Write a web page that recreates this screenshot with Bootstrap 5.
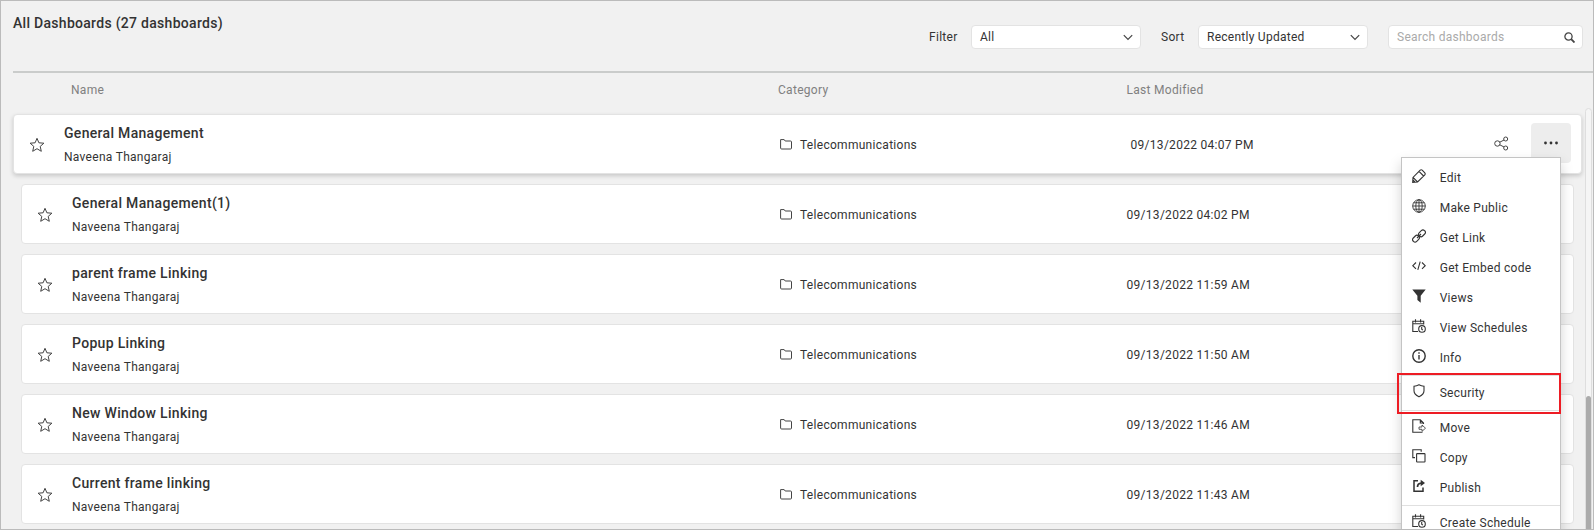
<!DOCTYPE html>
<html lang="en">
<head>
<meta charset="utf-8">
<title>All Dashboards</title>
<meta name="viewport" content="width=device-width, initial-scale=1">
<link href="https://cdn.jsdelivr.net/npm/bootstrap@5.3.0/dist/css/bootstrap.min.css" rel="stylesheet">
<style>
  body { font-family: Roboto, "Liberation Sans", sans-serif; font-size: 12px; line-height: 18px; letter-spacing: .29px; color: #333; background: #f1f1f1; }
  svg { display: block; fill: none; stroke: #444; stroke-width: 1; flex: none; }
  .frame { height: 530px; border: 1px solid #bbb; background: #f1f1f1; }
  .topbar { height: 72px; margin-left: 12px; border-bottom: 2px solid #cacccb; }
  .page-title { font-size: 14px; line-height: 20px; font-weight: 500; letter-spacing: .29px; padding-top: 12px; }
  .controls { padding: 24px 10px 0 0; height: 48px; }
  .ctl-label { width: 37px; }
  .ctl-label.wide { width: 42px; }
  .field { height: 24px; border: 1px solid #e3e3e3; border-radius: 4px; background: #fff; padding: 0 8px; letter-spacing: .26px; }
  .pick { width: 170px; margin-right: 20px; padding-right: 7px; }
  .search-field { width: 195px; color: #aaa; padding-right: 7px; }
  .cols { display: grid; grid-template-columns: 50px 706px 348.500px 1fr; }
  .col-head { height: 41px; padding: 8px 0 0 21px; color: #808080; }
  .name-head { padding-left: 49px; }
  .dash { height: 60px; width: 1553px; margin: 0 0 10px 20px; border: 1px solid #e3e3e3; border-radius: 4px; background: #fff; }
  .dash.active-row { width: 1569px; margin-left: 12px; box-shadow: 0 2px 4px rgba(0,0,0,.17); grid-template-columns: 50px 714px 352.500px 1fr 1fr; }
  .star { padding: 21.500px 0 0 14.500px; }
  .dash-name { font-size: 14px; line-height: 20px; font-weight: 500; letter-spacing: .31px; padding-top: 8px; margin-bottom: 5px; }
  .mid { padding-top: 21px; }
  .cat { padding-left: 2px; }
  .cat svg { margin: 2.500px 8px 0 0; }
  .more { width: 40px; height: 40px; border-radius: 4px; background: #ededed; margin: 8px 10px 0 0; padding: 18px 0 0 12px; }
  .share { margin: 20.500px 22.500px 0 0; }
  .ctx { position: absolute; top: 42px; right: 20px; width: 160px; height: 390px; border: 1px solid #c4c4c4; background: #fff; box-shadow: 0 6px 12px rgba(0,0,0,.175); padding-top: 5px; z-index: 3; letter-spacing: .27px; }
  .ctx-item { height: 30px; line-height: 30px; padding-left: 10px; gap: 13.700px; }
  .ctx-item svg { margin-top: 6px; stroke: #333; stroke-width: 1.100; }
  .ctx-line { height: 1px; background: #e0e0e0; margin: 2px 0; }
  .marked { position: absolute; left: -5px; top: 215px; width: 164px; height: 41px; border: 2px solid #ed1c24; }
  .track { position: absolute; right: 1px; top: 107px; bottom: -6px; width: 7px; border: 1px solid #dedede; border-radius: 4px; background: #f5f5f5; }
  .thumb { margin-top: 287px; height: 200px; background: #ababab; border-radius: 3px; }
</style>
</head>
<body class="overflow-hidden">
<svg width="0" height="0" class="position-absolute">
  <defs>
    <symbol id="star" viewBox="0 0 16 16"><path d="M8 1.300 9.900 5.800l5 .4-3.700 3.200 1.100 4.900L8 11.700l-4.300 2.600 1.100-4.900L1.100 6.200l5-.4z"/></symbol>
    <symbol id="folder" viewBox="0 0 12 11"><path d="M.6.600h3.600l1 1.400h5.300q1 0 1 1v6q0 1-1 1H1.600q-1 0-1-1z"/></symbol>
    <symbol id="cal" viewBox="0 0 14 14"><path d="M6 12.500H.8V2.200h10.900V5.500M.8 4.700h10.900M3.500.3v3.300M8.600.3v3.300"/><circle cx="10" cy="9.900" r="3.300"/><path d="M9.700 8v2.200l1.200 1"/></symbol>
    <symbol id="chev" viewBox="0 0 10 7"><path d="M.8 1.200 5 5.500l4.200-4.300" stroke-width="1.200"/></symbol>
  </defs>
</svg>

<main class="frame position-relative overflow-hidden">
  <header class="topbar d-flex justify-content-between">
    <h1 class="page-title m-0">All Dashboards (27 dashboards)</h1>
    <div class="controls d-flex align-items-center">
      <span class="ctl-label wide">Filter</span>
      <div class="field pick d-flex align-items-center justify-content-between"><span>All</span><svg width="10" height="7"><use href="#chev"/></svg></div>
      <span class="ctl-label">Sort</span>
      <div class="field pick d-flex align-items-center justify-content-between"><span>Recently Updated</span><svg width="10" height="7"><use href="#chev"/></svg></div>
      <div class="field search-field d-flex align-items-center justify-content-between"><span>Search dashboards</span>
        <svg width="11" height="11" viewBox="0 0 11 11"><circle cx="4.500" cy="4.500" r="3.600" stroke-width="1.300"/><path d="m7.200 7.200 3.300 3.300" stroke-width="1.800"/></svg></div>
    </div>
  </header>

  <div class="cols col-head"><span class="name-head">Name</span><span></span><span>Category</span><span>Last Modified</span></div>

  <section>
    <article class="dash active-row cols position-relative">
      <div class="star"><svg width="16" height="16"><use href="#star"/></svg></div>
      <div><div class="dash-name">General Management</div><div>Naveena Thangaraj</div></div>
      <div class="mid cat d-flex"><svg width="12" height="11"><use href="#folder"/></svg>Telecommunications</div>
      <div class="mid date">09/13/2022 04:07 PM</div>
      <div class="d-flex justify-content-end">
        <svg class="share" width="15" height="15" viewBox="0 0 15 15"><circle cx="3.400" cy="7.500" r="2.700"/><circle cx="11.700" cy="3" r="2"/><circle cx="11.700" cy="12" r="2"/><path d="M5.800 6.200 10 4M5.800 8.800 10 11"/></svg>
        <div class="more"><svg width="16" height="4" viewBox="0 0 16 4" style="fill:#333;stroke:none"><circle cx="2.500" cy="2" r="1.400"/><circle cx="8" cy="2" r="1.400"/><circle cx="13.500" cy="2" r="1.400"/></svg></div>
      </div>
      <div class="ctx">
        <div class="ctx-item d-flex"><svg width="14" height="14" viewBox="0 0 14 14"><path d="M.7 13.300 1 8.400 8.200 1.200q1-.9 2 0l2.600 2.600q.8 1 0 2L5.600 13zM1 8.400 5.600 13M7 2.400l4.600 4.600M.9 11l2 2"/></svg>Edit</div>
        <div class="ctx-item d-flex"><svg width="14" height="14" viewBox="0 0 14 14" style="stroke-width:.9"><circle cx="7" cy="7" r="6.300"/><ellipse cx="7" cy="7" rx="3.200" ry="6.300"/><path d="M7 .7v12.600M.7 7h12.600M1.600 3.800h10.800M1.600 10.200h10.800"/></svg>Make Public</div>
        <div class="ctx-item d-flex"><svg width="14" height="14" viewBox="0 0 14 14"><rect x="6.300" y="1.900" width="7.400" height="4.800" rx="2.300" transform="rotate(-45 10 4.300)"/><rect x=".3" y="7.300" width="7.400" height="4.800" rx="2.300" transform="rotate(-45 4 9.700)"/><path d="m5 9 4-4"/></svg>Get Link</div>
        <div class="ctx-item d-flex"><svg width="14" height="14" viewBox="0 0 14 14"><path d="M4 3.500.8 6.700 4 9.900M10 3.500l3.200 3.200L10 9.900M8.200 2.700 5.800 10.800"/></svg>Get Embed code</div>
        <div class="ctx-item d-flex"><svg width="14" height="14" viewBox="0 0 14 14" style="fill:#333;stroke:none"><path d="M.3.500h13.400L8.700 6.800v6.900L5.400 11V6.800z"/></svg>Views</div>
        <div class="ctx-item d-flex"><svg width="14" height="14"><use href="#cal"/></svg>View Schedules</div>
        <div class="ctx-item d-flex"><svg width="14" height="14" viewBox="0 0 14 14" style="stroke-width:1.400"><circle cx="7" cy="7" r="6.200"/><path d="M7 6v4.500M7 3.300v1.500"/></svg>Info</div>
        <div class="ctx-line"></div>
        <div class="ctx-item d-flex"><svg width="14" height="14" viewBox="0 0 14 14"><path d="M7 .8Q9.300 2 12 2.200v4.600Q12 10.500 7 12.800 2 10.500 2 6.800V2.200Q4.700 2 7 .8z"/></svg>Security</div>
        <div class="ctx-line"></div>
        <div class="ctx-item d-flex"><svg width="14" height="14" viewBox="0 0 14 14"><path d="M11.500 5V4L8.300.7H.8v12.600h9.700M8.300.7V4h3.200"/><path d="M7 8h3V6l3.500 3.200L10 12.300v-2H7z" stroke-width=".8"/></svg>Move</div>
        <div class="ctx-item d-flex"><svg width="14" height="14" viewBox="0 0 14 14"><rect x="4.600" y="4.600" width="8.400" height="8.400" rx=".6"/><path d="M3 8.600H.8V.7h8.400v2"/></svg>Copy</div>
        <div class="ctx-item d-flex"><svg width="14" height="14" viewBox="0 0 14 14" style="stroke-width:1.500"><path d="M6 1.800H2v10.400h9V8.500"/><path d="M5.500 8Q5.500 4.500 9.500 4.200" stroke-width="1.700"/><path d="M8.700.8 13 4 8.700 7.300z" fill="#333" stroke="none"/></svg>Publish</div>
        <div class="ctx-line"></div>
        <div class="ctx-item d-flex"><svg width="14" height="14"><use href="#cal"/></svg>Create Schedule</div>
        <div class="marked"></div>
      </div>
    </article>
  </section>
  <section id="rows"></section>
  <div class="track"><div class="thumb"></div></div>
</main>
<script src="https://cdn.jsdelivr.net/npm/bootstrap@5.3.0/dist/js/bootstrap.bundle.min.js"></script>
<script>
  const rows = [
    ['General Management(1)', '04:02 PM'],
    ['parent frame Linking', '11:59 AM'],
    ['Popup Linking', '11:50 AM'],
    ['New Window Linking', '11:46 AM'],
    ['Current frame linking', '11:43 AM']
  ];
  document.getElementById('rows').innerHTML = rows.map(([name, time]) => `
    <article class="dash cols">
      <div class="star"><svg width="16" height="16"><use href="#star"/></svg></div>
      <div><div class="dash-name">${name}</div><div>Naveena Thangaraj</div></div>
      <div class="mid cat d-flex"><svg width="12" height="11"><use href="#folder"/></svg>Telecommunications</div>
      <div class="mid date">09/13/2022 ${time}</div>
    </article>`).join('');
</script>
</body>
</html>
